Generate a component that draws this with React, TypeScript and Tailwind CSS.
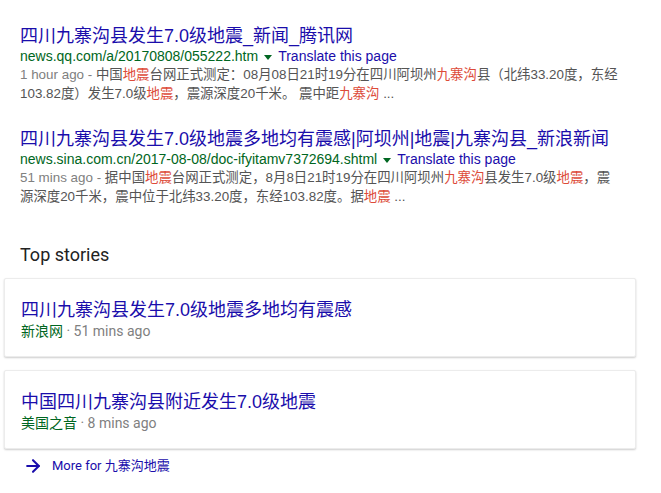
import { ArrowRight } from 'lucide-react'

const FONT = "font-['Liberation_Sans','Noto_Sans_CJK_SC',sans-serif]"
const ROBOTO = "font-['Roboto','Noto_Sans_CJK_SC',sans-serif]"

function Em({ children }: { children: React.ReactNode }) {
  return <span className="text-[#dd4b39]">{children}</span>
}

function UrlLine({ url }: { url: string }) {
  return (
    <div className="flex items-center text-[14px] leading-[18px] whitespace-nowrap">
      <span className="text-[#006621]">{url}</span>
      <span className="mx-[6px] inline-block h-0 w-0 border-x-[4px] border-t-[5px] border-x-transparent border-t-[#006621] mt-[2px]" />
      <span className="text-[#1a0dab]">Translate this page</span>
    </div>
  )
}

function StoryCard({ title, source, time }: { title: string; source: string; time: string }) {
  return (
    <div className="rounded-[2px] border border-[#ececec] bg-white pb-[15px] pl-4 pt-[20px] shadow-[0_1px_2px_rgba(0,0,0,0.2)]">
      <div className="text-[18px] leading-[22px] text-[#1a0dab]">{title}</div>
      <div className={`${ROBOTO} text-[14px] leading-[20px] text-[#808080]`}>
        <span className="text-[#006621]">{source}</span> · {time}
      </div>
    </div>
  )
}

export default function App() {
  return (
    <div className={`${FONT} min-h-[493px] w-[661px] bg-white pt-[25px]`}>
      <div className="pl-5">
        <div className="text-[18px] leading-[22px] text-[#1a0dab] whitespace-nowrap">
          四川九寨沟县发生7.0级地震_新闻_腾讯网
        </div>
        <UrlLine url="news.qq.com/a/20170808/055222.htm" />
        <div className="text-[13.4px] leading-[19px] text-[#545454] whitespace-nowrap">
          <span className="text-[#808080]">1 hour ago - </span>中国<Em>地震</Em>台网正式测定：08月08日21时19分在四川阿坝州<Em>九寨沟</Em>县（北纬33.20度，东经
          <br />
          103.82度）发生7.0级<Em>地震</Em>，震源深度20千米。 震中距<Em>九寨沟</Em> ...
        </div>
      </div>

      <div className="mt-[25px] pl-5">
        <div className="text-[18px] leading-[22px] text-[#1a0dab] whitespace-nowrap">
          四川九寨沟县发生7.0级地震多地均有震感|阿坝州|地震|九寨沟县_新浪新闻
        </div>
        <UrlLine url="news.sina.com.cn/2017-08-08/doc-ifyitamv7372694.shtml" />
        <div className="text-[13.4px] leading-[19px] text-[#545454] whitespace-nowrap">
          <span className="text-[#808080]">51 mins ago - </span>据中国<Em>地震</Em>台网正式测定，8月8日21时19分在四川阿坝州<Em>九寨沟</Em>县发生7.0级<Em>地震</Em>，震
          <br />
          源深度20千米，震中位于北纬33.20度，东经103.82度。据<Em>地震</Em> ...
        </div>
      </div>

      <div className={`${ROBOTO} mt-[38px] pl-5 text-[18px] leading-[22px] text-[#222]`}>Top stories</div>

      <div className="mt-[12px] flex w-[632px] flex-col gap-[13px] pl-[4px] box-content">
        <StoryCard title="四川九寨沟县发生7.0级地震多地均有震感" source="新浪网" time="51 mins ago" />
        <StoryCard title="中国四川九寨沟县附近发生7.0级地震" source="美国之音" time="8 mins ago" />
      </div>

      <div className={`${ROBOTO} mt-[7px] flex items-center pl-[23px] text-[13px] leading-[18px] text-[#1a0dab]`}>
        <ArrowRight className="h-[20px] w-[20px]" strokeWidth={2.5} />
        <span className="ml-[9px]">More for 九寨沟地震</span>
      </div>
    </div>
  )
}
